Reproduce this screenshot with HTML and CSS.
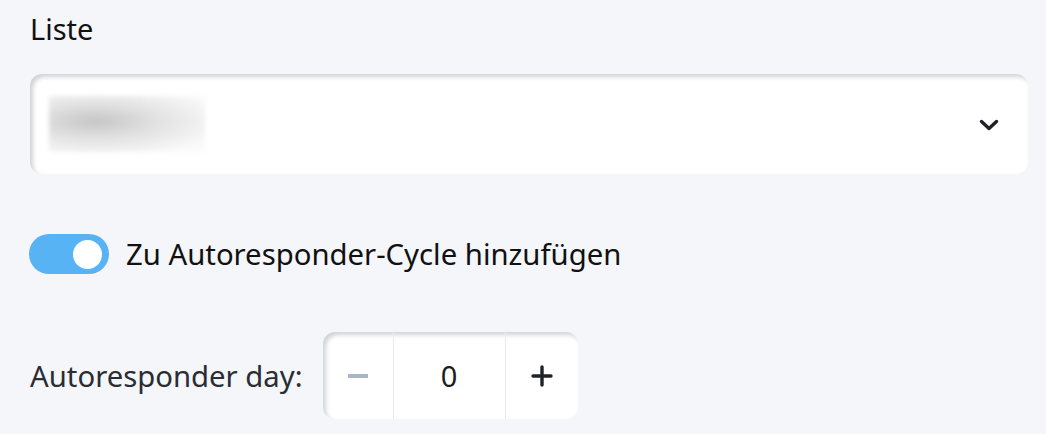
FILE: index.html
```html
<!DOCTYPE html>
<html>
<head>
  <meta name="viewport" content="width=device-width, initial-scale=1.0">
  <title>Liste</title>
  <link rel="stylesheet" href="styles.css">
</head>
<body>
  <div class="form">
    <label class="field-label">Liste</label>
    <div class="select">
      <span class="select-value"></span>
      <svg class="chevron" width="20" height="12" viewBox="0 0 20 12">
        <path d="M2.5 2.5 L10 9.5 L17.5 2.5" fill="none" stroke="#1f2226" stroke-width="3.4" stroke-linecap="round" stroke-linejoin="round"/>
      </svg>
    </div>

    <div class="toggle-row">
      <span class="toggle"><span class="toggle-knob"></span></span>
      <span class="toggle-text">Zu Autoresponder-Cycle hinzufügen</span>
    </div>

    <div class="day-row">
      <span class="day-label">Autoresponder day:</span>
      <div class="stepper">
        <span class="stepper-btn minus"><span class="minus-bar"></span></span>
        <span class="stepper-value">0</span>
        <span class="stepper-btn plus">
          <svg width="22" height="22" viewBox="0 0 22 22">
            <path d="M11 2 V20 M2 11 H20" stroke="#1f2226" stroke-width="3.4" stroke-linecap="round"/>
          </svg>
        </span>
      </div>
    </div>
  </div>
</body>
</html>
```

FILE: styles.css
```css
body {
  margin: 0;
  background-color: #f4f6fa;
  font-family: "Source Sans Pro", "Noto Sans", sans-serif;
  color: #111;
}

.form {
  padding: 12px 18px 0 30px;
}

.field-label {
  display: block;
  font-size: 29px;
  line-height: 34px;
}

.select {
  margin-top: 28px;
  height: 100px;
  background: #fff;
  border-radius: 12px;
  box-shadow: inset 3px 3px 4px rgba(120, 130, 140, 0.35);
  display: flex;
  align-items: center;
  justify-content: space-between;
  padding: 0 29px 0 19px;
}

.select-value {
  width: 156px;
  height: 56px;
  background: radial-gradient(ellipse at 30% 45%, #c6c6c6 0%, #e2e2e2 40%, #fafafa 85%);
  filter: blur(2px);
}

.chevron {
  display: block;
  margin-top: 2px;
}

.toggle-row {
  display: flex;
  align-items: center;
  margin-top: 60px;
  margin-left: -1px;
}

.toggle {
  width: 80px;
  height: 40px;
  border-radius: 20px;
  background: #58b3f5;
  display: flex;
  align-items: center;
  justify-content: flex-end;
  padding-right: 7px;
  box-sizing: border-box;
}

.toggle-knob {
  width: 29px;
  height: 29px;
  border-radius: 50%;
  background: #fff;
}

.toggle-text {
  font-size: 29.3px;
  line-height: 40px;
  margin-left: 17px;
}

.day-row {
  display: flex;
  align-items: center;
  margin-top: 58px;
}

.day-label {
  font-size: 29.3px;
  color: #2a2d33;
  margin-right: 20px;
}

.stepper {
  display: flex;
  height: 87px;
  background: #fff;
  border-radius: 12px;
  box-shadow: inset 3px 3px 4px rgba(120, 130, 140, 0.35);
}

.stepper-btn {
  width: 70px;
  display: flex;
  align-items: center;
  justify-content: center;
}

.plus {
  width: 72px;
  border-left: 1px solid #e8eaee;
}

.minus-bar {
  width: 20px;
  height: 4px;
  background: #a9b6c3;
}

.stepper-value {
  width: 111px;
  border-left: 1px solid #e8eaee;
  display: flex;
  align-items: center;
  justify-content: center;
  font-size: 29px;
  color: #1a1d22;
}
```
